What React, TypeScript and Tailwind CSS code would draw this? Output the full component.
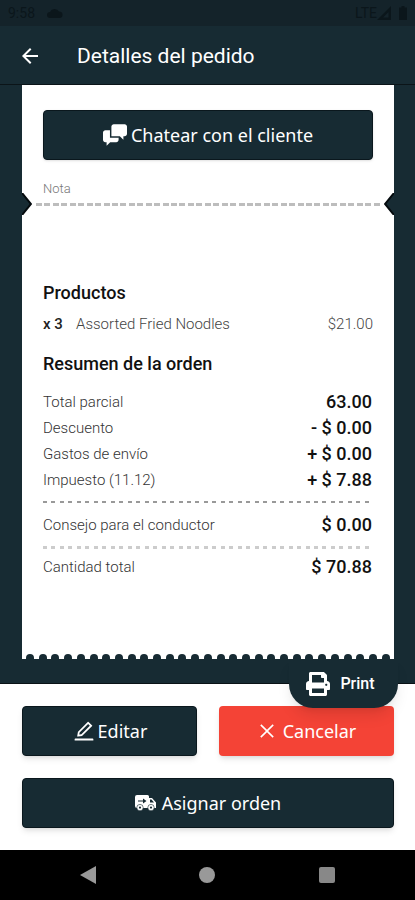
import { AiOutlineClose, AiOutlineEdit } from "react-icons/ai";
import { FaPrint } from "react-icons/fa";
import { MdArrowBack } from "react-icons/md";

const summary = [
    { label: "Total parcial", value: "63.00" },
    { label: "Descuento", value: "- $ 0.00" },
    { label: "Gastos de envío", value: "+ $ 0.00" },
    { label: "Impuesto (11.12)", value: "+ $ 7.88" },
];

function StatusBar() {
    return (
        <div className="flex h-[26px] items-center justify-between bg-[#14232a] px-2 text-sm text-[#0b161b]">
            <div className="flex items-center gap-3">
                <span>9:58</span>
                <svg viewBox="0 0 16 10" className="h-2.5 w-4" fill="currentColor">
                    <path d="M3 10a3 3 0 0 1 0-6A5 5 0 0 1 12 3.5 3.3 3.3 0 0 1 13 10z" />
                </svg>
            </div>
            <div className="flex items-center">
                <span>LTE</span>
                <svg viewBox="0 0 14 14" className="size-3.5" fill="currentColor">
                    <path d="M14 0v14H0zM11.5 6 6 11.5h5.500z" fillRule="evenodd" />
                </svg>
                <svg viewBox="0 0 8 14" className="ml-2 h-3.5 w-2" fill="currentColor">
                    <path d="M2.500 0h3v1.500H8V14H0V1.500h2.500z" />
                </svg>
            </div>
        </div>
    );
}

function ChatIcon() {
    return (
        <svg viewBox="0 0 20 20" className="size-6" fill="currentColor">
            <path d="M5.800 12.200V6H2C.9 6 0 6.900 0 8v6c0 1.100.9 2 2 2h1v3l3-3h5c1.100 0 2-.9 2-2v-1.820a.943.943 0 0 1-.2.021h-7zM18 1H9c-1.100 0-2 .9-2 2v8h7l3 3v-3h1c1.100 0 2-.899 2-2V3c0-1.100-.9-2-2-2z" />
        </svg>
    );
}

function TruckIcon() {
    return (
        <svg viewBox="0 0 21 16" className="h-4 w-[21px]" fill="currentColor">
            <path d="M2 0h10.500a1.500 1.500 0 0 1 1.500 1.500V3h3l4 4.500V13H2a2 2 0 0 1-2-2V2a2 2 0 0 1 2-2z" />
            <path d="M15 4.500h1.500L19 7.500h-4zM3 5.500h5V3.500L11.500 6 8 8.500v-2H3z" fill="#172b33" />
            <g stroke="#172b33" strokeWidth="0.6">
                <circle cx="5" cy="12.600" r="3.200" />
                <circle cx="16" cy="12.600" r="3.200" />
            </g>
            <circle cx="5" cy="12.600" r="1.100" fill="#172b33" />
            <circle cx="16" cy="12.600" r="1.100" fill="#172b33" />
        </svg>
    );
}

function Dashes({ count, className }: { count: number; className: string }) {
    return (
        <div className="flex justify-between" aria-hidden="true">
            {Array.from({ length: count }, (_, i) => (
                <span key={i} className={className} />
            ))}
        </div>
    );
}

function SummaryRow({ label, value }: { label: string; value: string }) {
    return (
        <div className="flex items-center justify-between">
            <dt className="text-[15px] font-light text-[#333]">{label}</dt>
            <dd className="pr-px text-lg leading-[26px] font-medium text-[#111]">{value}</dd>
        </div>
    );
}

export default function App() {
    return (
        <div className="w-full bg-white font-['Roboto',sans-serif]">
            <div className="relative border-b border-[#0a1216] bg-[#172b33] pb-6">
                <StatusBar />
                <header className="flex h-[59px] items-center gap-[35px] border-b border-[#0b1418] px-[18px] pt-0.5 text-white">
                    <button type="button" aria-label="Volver">
                        <MdArrowBack className="size-6" />
                    </button>
                    <h1 className="text-[21px] leading-7">Detalles del pedido</h1>
                </header>

                <main className="mr-[21px] ml-[22px] bg-white">
                    <div className="px-[21px] pt-[25px]">
                        <button
                            type="button"
                            className="flex h-[50px] w-full items-center justify-center gap-1 rounded border border-[#0a171d] bg-[#172b33] font-['Noto_Sans',sans-serif] text-lg text-white shadow-sm"
                        >
                            <ChatIcon />
                            Chatear con el cliente
                        </button>
                        <p className="mt-[21px] text-[13px] leading-4 font-light text-[#777]">Nota</p>
                    </div>

                    {/* Ticket notches */}
                    <div className="-mt-1 flex items-center">
                        <svg viewBox="0 0 10 22" className="h-[22px] w-2.5" fill="#172b33">
                            <path d="M0 0 9 11 0 22" stroke="#050b0e" strokeWidth="2" />
                        </svg>
                        <div className="flex-1 px-1">
                            <Dashes count={41} className="h-[3px] w-1.5 bg-[#bdbdbd]" />
                        </div>
                        <svg viewBox="0 0 10 22" className="h-[22px] w-2.5" fill="#172b33">
                            <path d="M10 0 1 11 10 22" stroke="#050b0e" strokeWidth="2" />
                        </svg>
                    </div>

                    <div className="px-[21px] pt-16 pb-[74px]">
                        <h2 className="text-lg leading-7 font-medium text-[#111]">Productos</h2>
                        <div className="mt-[5px] flex items-center text-[15px] leading-6">
                            <span className="w-[33px] font-medium text-[#222]">x 3</span>
                            <span className="flex-1 font-light text-[#444]">Assorted Fried Noodles</span>
                            <span className="font-light text-[#444]">$21.00</span>
                        </div>

                        <h2 className="mt-3.5 text-lg leading-7 font-medium text-[#111]">Resumen de la orden</h2>
                        <dl className="mt-[11px]">
                            {summary.map((row) => (
                                <SummaryRow key={row.label} label={row.label} value={row.value} />
                            ))}
                        </dl>
                        <div className="pt-2 pr-1 pb-[9px]">
                            <Dashes count={39} className="h-0.5 w-1 bg-[#999]" />
                        </div>
                        <dl>
                            <SummaryRow label="Consejo para el conductor" value="$ 0.00" />
                        </dl>
                        <div className="pt-2 pr-1 pb-[5px]">
                            <Dashes count={39} className="h-[3px] w-1 bg-[#ccc]" />
                        </div>
                        <dl>
                            <SummaryRow label="Cantidad total" value="$ 70.88" />
                        </dl>
                    </div>

                    {/* Torn bottom edge */}
                    <div className="h-[5px] overflow-hidden px-1">
                        <Dashes count={29} className="size-2 rounded-full bg-[#172b33]" />
                    </div>
                </main>

                <button
                    type="button"
                    className="absolute right-[17px] -bottom-[25px] z-10 flex h-[49px] w-[109px] items-center justify-center gap-2.5 rounded-b-3xl bg-[#172b33] pr-1.5 font-medium text-white shadow-lg"
                >
                    <FaPrint className="size-6" />
                    Print
                </button>
            </div>

            <section className="grid grid-cols-2 gap-[22px] py-[22px] pr-[21px] pl-[22px] font-['Noto_Sans',sans-serif] text-lg text-white">
                <button
                    type="button"
                    className="flex h-[50px] items-center justify-center gap-0.5 rounded border border-[#0a171d] bg-[#172b33] shadow-md"
                >
                    <AiOutlineEdit className="size-6" />
                    Editar
                </button>
                <button type="button" className="flex h-[50px] items-center justify-center gap-1.5 rounded bg-[#f44336] shadow-md">
                    <AiOutlineClose className="size-5" />
                    Cancelar
                </button>
                <button
                    type="button"
                    className="col-span-2 flex h-[50px] items-center justify-center gap-1.5 rounded border border-[#0a171d] bg-[#172b33] shadow-md"
                >
                    <TruckIcon />
                    Asignar orden
                </button>
            </section>

            <nav className="grid h-[50px] grid-cols-3 items-center justify-items-center bg-black px-7 text-[#999]">
                <button type="button" aria-label="Atrás">
                    <svg viewBox="0 0 16 18" className="h-[18px] w-4" fill="currentColor">
                        <path d="M16 0v18L0 9z" />
                    </svg>
                </button>
                <button type="button" aria-label="Inicio" className="size-4 rounded-full bg-[#999]" />
                <button type="button" aria-label="Recientes" className="size-4 rounded-xs bg-[#888]" />
            </nav>
        </div>
    );
}
